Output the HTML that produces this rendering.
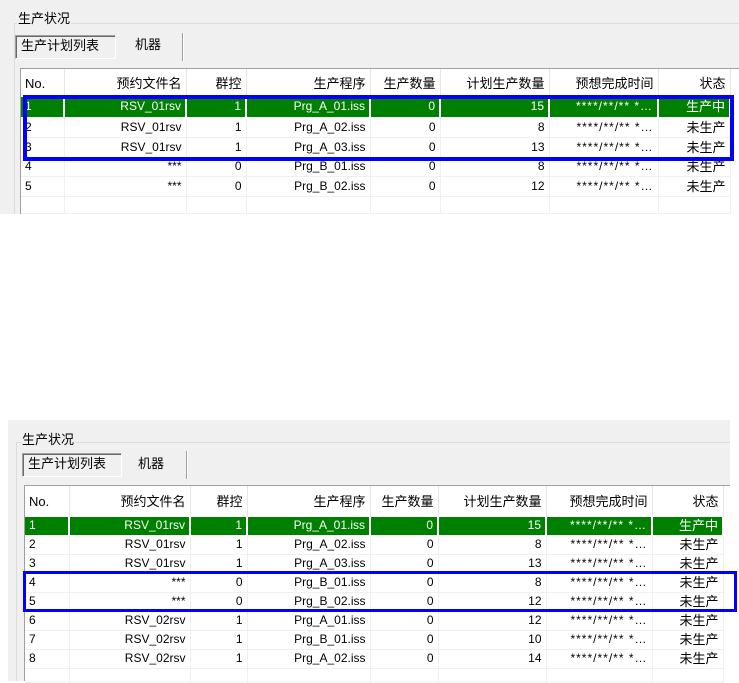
<!DOCTYPE html>
<html><head><meta charset="utf-8"><style>
*{margin:0;padding:0;box-sizing:border-box}
body{width:739px;height:681px;background:#fff;position:relative;overflow:hidden;font-family:"Liberation Sans","Noto Sans CJK SC",sans-serif;color:#000}
.panel{position:absolute;background:#f0f0f0}
.grp{position:absolute;border-top:1px solid #dcdcdc;border-left:1px solid #dcdcdc}
.lbl{position:absolute;font-size:13px;background:#f0f0f0;padding:0 1px;line-height:16px}
.tab1{position:absolute;border:1px solid #a0a0a0;border-right-color:#fff;border-bottom-color:#fff;box-shadow:inset 1px 1px 0 #696969;font-size:13px;line-height:20px;padding-left:5px}
.tab2{position:absolute;font-size:13px;line-height:20px}
.sep{position:absolute;width:2px;border-left:1px solid #a0a0a0;border-right:1px solid #fff}
table{position:absolute;border-collapse:collapse;table-layout:fixed;background:#fff;font-size:12px}
td{border-right:1px solid #f0f0f0;border-bottom:1px solid #f0f0f0;text-align:right;padding:0 4px;white-space:nowrap;overflow:hidden;line-height:13px}
td:first-child{text-align:left}
td.s{font-size:13px}
td.t{letter-spacing:1px}
tr.h td{font-size:13px;border-right:1px solid #e5e5e5;border-bottom:none}
tr.g td{background:#008000;color:#fff;border-right:2px solid #fff;border-bottom:1px solid #fff}
.list{position:absolute;background:#fff;border-top:1px solid #a0a0a0;border-left:1px solid #a0a0a0}
.blue{position:absolute;border:4px solid #0000ff}
</style></head><body>

<!-- TOP -->
<div class="panel" style="left:0;top:0;width:739px;height:214px"></div>
<div class="grp" style="left:14px;top:23px;width:725px;height:191px"></div>
<div class="lbl" style="left:17px;top:11px">生产状况</div>
<div class="tab1" style="left:15px;top:35px;width:101px;height:24px">生产计划列表</div>
<div class="tab2" style="left:135px;top:35px">机器</div>
<div class="sep" style="left:182px;top:33px;height:28px"></div>
<div class="list" style="left:20px;top:68px;width:719px;height:146px"></div>
<table style="left:21px;top:69px">
<colgroup><col style="width:43px"><col style="width:122px"><col style="width:60px"><col style="width:124px"><col style="width:70px"><col style="width:109px"><col style="width:109px"><col style="width:72px"></colgroup>
<tr class="h" style="height:28px"><td>No.</td><td>预约文件名</td><td>群控</td><td>生产程序</td><td>生产数量</td><td>计划生产数量</td><td>预想完成时间</td><td>状态</td></tr>
<tr class="g" style="height:20px"><td>1</td><td>RSV_01rsv</td><td>1</td><td>Prg_A_01.iss</td><td>0</td><td>15</td><td class="t">****/**/** *…</td><td class="s">生产中</td></tr>
<tr style="height:20px"><td>2</td><td>RSV_01rsv</td><td>1</td><td>Prg_A_02.iss</td><td>0</td><td>8</td><td class="t">****/**/** *…</td><td class="s">未生产</td></tr>
<tr style="height:20px"><td>3</td><td>RSV_01rsv</td><td>1</td><td>Prg_A_03.iss</td><td>0</td><td>13</td><td class="t">****/**/** *…</td><td class="s">未生产</td></tr>
<tr style="height:19px"><td>4</td><td>***</td><td>0</td><td>Prg_B_01.iss</td><td>0</td><td>8</td><td class="t">****/**/** *…</td><td class="s">未生产</td></tr>
<tr style="height:20px"><td>5</td><td>***</td><td>0</td><td>Prg_B_02.iss</td><td>0</td><td>12</td><td class="t">****/**/** *…</td><td class="s">未生产</td></tr>
<tr style="height:17px"><td></td><td></td><td></td><td></td><td></td><td></td><td></td><td></td></tr>
</table>
<div class="blue" style="left:23px;top:95px;width:711px;height:66px"></div>

<!-- BOTTOM -->
<div class="panel" style="left:8px;top:420px;width:722px;height:261px"></div>
<div class="grp" style="left:16px;top:442px;width:714px;height:239px"></div>
<div class="lbl" style="left:21px;top:432px">生产状况</div>
<div class="tab1" style="left:22px;top:453px;width:100px;height:24px">生产计划列表</div>
<div class="tab2" style="left:138px;top:454px">机器</div>
<div class="sep" style="left:186px;top:451px;height:28px"></div>
<div class="list" style="left:24px;top:485px;width:706px;height:196px"></div>
<table style="left:25px;top:486px">
<colgroup><col style="width:44px"><col style="width:121px"><col style="width:57px"><col style="width:123px"><col style="width:68px"><col style="width:108px"><col style="width:106px"><col style="width:71px"></colgroup>
<tr class="h" style="height:31px"><td>No.</td><td>预约文件名</td><td>群控</td><td>生产程序</td><td>生产数量</td><td>计划生产数量</td><td>预想完成时间</td><td>状态</td></tr>
<tr class="g" style="height:18px"><td>1</td><td>RSV_01rsv</td><td>1</td><td>Prg_A_01.iss</td><td>0</td><td>15</td><td class="t">****/**/** *…</td><td class="s">生产中</td></tr>
<tr style="height:19px"><td>2</td><td>RSV_01rsv</td><td>1</td><td>Prg_A_02.iss</td><td>0</td><td>8</td><td class="t">****/**/** *…</td><td class="s">未生产</td></tr>
<tr style="height:19px"><td>3</td><td>RSV_01rsv</td><td>1</td><td>Prg_A_03.iss</td><td>0</td><td>13</td><td class="t">****/**/** *…</td><td class="s">未生产</td></tr>
<tr style="height:19px"><td>4</td><td>***</td><td>0</td><td>Prg_B_01.iss</td><td>0</td><td>8</td><td class="t">****/**/** *…</td><td class="s">未生产</td></tr>
<tr style="height:19px"><td>5</td><td>***</td><td>0</td><td>Prg_B_02.iss</td><td>0</td><td>12</td><td class="t">****/**/** *…</td><td class="s">未生产</td></tr>
<tr style="height:19px"><td>6</td><td>RSV_02rsv</td><td>1</td><td>Prg_A_01.iss</td><td>0</td><td>12</td><td class="t">****/**/** *…</td><td class="s">未生产</td></tr>
<tr style="height:19px"><td>7</td><td>RSV_02rsv</td><td>1</td><td>Prg_B_01.iss</td><td>0</td><td>10</td><td class="t">****/**/** *…</td><td class="s">未生产</td></tr>
<tr style="height:19px"><td>8</td><td>RSV_02rsv</td><td>1</td><td>Prg_A_02.iss</td><td>0</td><td>14</td><td class="t">****/**/** *…</td><td class="s">未生产</td></tr>
<tr style="height:14px"><td></td><td></td><td></td><td></td><td></td><td></td><td></td><td></td></tr>
</table>
<div class="blue" style="left:23px;top:571px;width:714px;height:41px;border-width:3px"></div>
</body></html>
